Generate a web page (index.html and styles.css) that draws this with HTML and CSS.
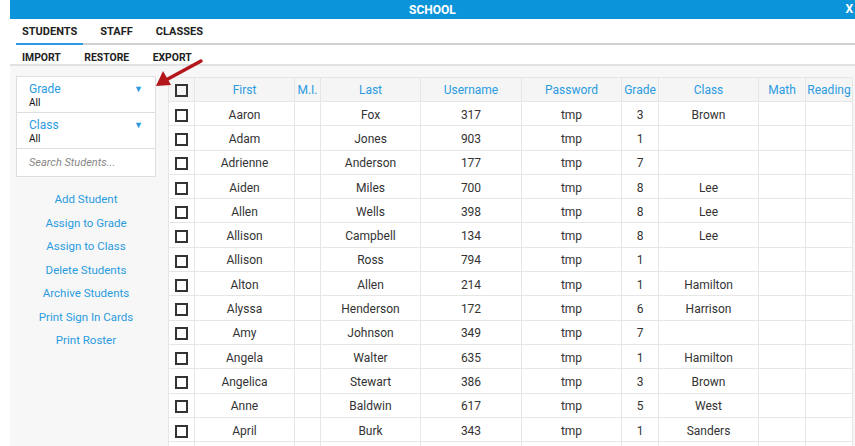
FILE: index.html
```html
<!DOCTYPE html>
<html lang="en">
<head>
    <meta charset="UTF-8">
    <title>School</title>
    <link rel="stylesheet" href="styles.css">
</head>
<body>
    <div class="window">
        <div class="titlebar">
            <span class="title">SCHOOL</span>
            <span class="close">X</span>
        </div>

        <div class="tabs">
            <span class="tab active">STUDENTS</span>
            <span class="tab">STAFF</span>
            <span class="tab">CLASSES</span>
        </div>

        <div class="subnav">
            <span>IMPORT</span>
            <span>RESTORE</span>
            <span>EXPORT</span>
        </div>

        <div class="main">
            <div class="sidebar">
                <div class="filters">
                    <div class="filter">
                        <div class="filter-name">Grade <span class="caret">&#9660;</span></div>
                        <div class="filter-value">All</div>
                    </div>
                    <div class="filter">
                        <div class="filter-name">Class <span class="caret">&#9660;</span></div>
                        <div class="filter-value">All</div>
                    </div>
                    <div class="search">Search Students...</div>
                </div>

                <ul class="actions">
                    <li>Add Student</li>
                    <li>Assign to Grade</li>
                    <li>Assign to Class</li>
                    <li>Delete Students</li>
                    <li>Archive Students</li>
                    <li>Print Sign In Cards</li>
                    <li>Print Roster</li>
                </ul>
            </div>

            <table class="students">
                <colgroup>
                    <col style="width:26px">
                    <col style="width:100px">
                    <col style="width:26px">
                    <col style="width:100px">
                    <col style="width:101px">
                    <col style="width:100px">
                    <col style="width:37px">
                    <col style="width:100px">
                    <col style="width:47px">
                    <col style="width:47px">
                </colgroup>
                <thead>
                    <tr>
                        <th><span class="box"></span></th>
                        <th>First</th>
                        <th>M.I.</th>
                        <th>Last</th>
                        <th>Username</th>
                        <th>Password</th>
                        <th>Grade</th>
                        <th>Class</th>
                        <th>Math</th>
                        <th>Reading</th>
                    </tr>
                </thead>
                <tbody id="rows"></tbody>
            </table>
        </div>

        <svg class="pointer" width="60" height="40" viewBox="0 0 60 40">
            <line x1="55" y1="3" x2="20" y2="22" stroke="#b3161b" stroke-width="3.5" stroke-linecap="round"/>
            <polygon points="10,28 17,13 25,27" fill="#b3161b"/>
        </svg>
    </div>

    <script>
        const students = [
            ['Aaron', 'Fox', 317, 3, 'Brown'],
            ['Adam', 'Jones', 903, 1, ''],
            ['Adrienne', 'Anderson', 177, 7, ''],
            ['Aiden', 'Miles', 700, 8, 'Lee'],
            ['Allen', 'Wells', 398, 8, 'Lee'],
            ['Allison', 'Campbell', 134, 8, 'Lee'],
            ['Allison', 'Ross', 794, 1, ''],
            ['Alton', 'Allen', 214, 1, 'Hamilton'],
            ['Alyssa', 'Henderson', 172, 6, 'Harrison'],
            ['Amy', 'Johnson', 349, 7, ''],
            ['Angela', 'Walter', 635, 1, 'Hamilton'],
            ['Angelica', 'Stewart', 386, 3, 'Brown'],
            ['Anne', 'Baldwin', 617, 5, 'West'],
            ['April', 'Burk', 343, 1, 'Sanders'],
            ['', '', '', '', '']
        ];

        const tbody = document.getElementById('rows');
        students.forEach(function(s) {
            const tr = document.createElement('tr');
            const box = s[0] ? '<span class="box"></span>' : '';
            tr.innerHTML = `
                <td>${box}</td>
                <td>${s[0]}</td>
                <td></td>
                <td>${s[1]}</td>
                <td>${s[2]}</td>
                <td>${s[0] ? 'tmp' : ''}</td>
                <td>${s[3]}</td>
                <td>${s[4]}</td>
                <td></td>
                <td></td>
            `;
            tbody.appendChild(tr);
        });
    </script>
</body>
</html>
```

FILE: styles.css
```css
body {
    margin: 0;
    font-family: Roboto, "Liberation Sans", Arial, sans-serif;
    font-size: 12px;
    color: #333;
    background: white;
    overflow: hidden;
}
.window {
    position: relative;
    margin-left: 10px;
    height: 446px;
}
.titlebar {
    height: 19px;
    background: #0b94da;
    color: white;
    font-weight: bold;
    font-size: 12px;
    display: flex;
    align-items: center;
    justify-content: center;
    position: relative;
}
.close {
    position: absolute;
    right: 2px;
    top: 2px;
    font-size: 12px;
}
.tabs {
    margin-left: 6px;
    height: 24px;
    display: flex;
    align-items: flex-end;
    border-bottom: 2px solid #d0d0d0;
}
.tab {
    font-weight: bold;
    font-size: 11px;
    color: #222;
    padding: 0 6px 5px 6px;
    margin-right: 11px;
}
.tab.active {
    border-bottom: 2px solid #2a9be0;
    margin-bottom: -2px;
}
.subnav {
    height: 21px;
    display: flex;
    align-items: center;
    padding: 5px 0 0 12px;
    box-sizing: border-box;
    border-bottom: 2px solid #e2e2e2;
}
.subnav span {
    font-weight: bold;
    font-size: 10.4px;
    color: #222;
    margin-right: 23.5px;
}
.main {
    background: #f7f7f7;
    height: 380px;
    display: flex;
    padding: 10px 3px 0 6px;
    box-sizing: border-box;
    overflow: hidden;
}
.sidebar {
    width: 140px;
    flex: none;
    margin-right: 12px;
}
.filters {
    background: white;
    border: 1px solid #dedede;
}
.filter {
    height: 36px;
    border-bottom: 1px solid #dedede;
    padding: 5px 12px 0 12px;
    box-sizing: border-box;
}
.filter-name {
    color: #2a9be0;
    font-size: 12px;
    display: flex;
    justify-content: space-between;
    line-height: 14px;
}
.caret {
    font-size: 9px;
}
.filter-value {
    font-size: 10px;
    color: #111;
    line-height: 14px;
}
.search {
    height: 27px;
    line-height: 27px;
    padding-left: 12px;
    color: #888;
    font-style: italic;
    font-size: 11px;
}
.actions {
    list-style: none;
    margin: 15px 0 0 0;
    padding: 0;
    text-align: center;
}
.actions li {
    color: #2a9be0;
    font-size: 11.5px;
    height: 23.5px;
    line-height: 14px;
}
.students {
    border-collapse: collapse;
    table-layout: fixed;
    width: 684px;
    background: white;
    flex: none;
    align-self: flex-start;
    margin-top: 1px;
}
.students th,
.students td {
    border: 1px solid #e6e6e6;
    text-align: center;
    padding: 0;
    white-space: nowrap;
    overflow: hidden;
}
.students th {
    background: #f5f5f5;
    color: #2a9be0;
    font-weight: normal;
    font-size: 12px;
    height: 22px;
    padding-top: 1px;
}
.students td {
    height: 21.3px;
    font-size: 12px;
    color: #333;
    padding-top: 2px;
}
.box {
    display: inline-block;
    width: 9px;
    height: 9px;
    border: 2px solid #333;
    vertical-align: middle;
}
.pointer {
    position: absolute;
    left: 136px;
    top: 58px;
}
```
